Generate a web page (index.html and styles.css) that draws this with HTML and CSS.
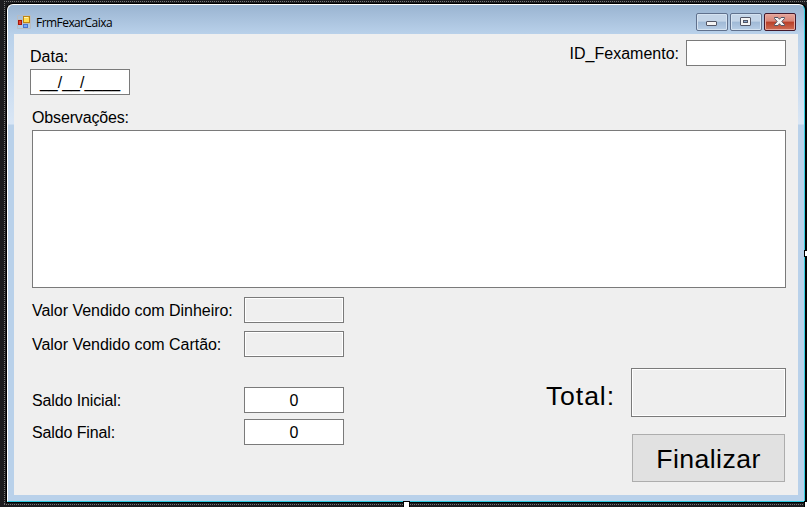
FILE: index.html
```html
<!DOCTYPE html>
<html lang="pt-BR">
<head>
<meta charset="utf-8">
<title>FrmFexarCaixa</title>
<link rel="stylesheet" href="styles.css">
</head>
<body>
<div class="designer">
  <svg class="selection" width="807" height="507" aria-hidden="true">
    <path d="M4 1.5H807M4 504.5H807" stroke="#777" stroke-dasharray="1 1"/>
    <path d="M4.500 1V504" stroke="#777" stroke-dasharray="1 1"/>
  </svg>
  <main class="window">
    <header class="titlebar">
      <svg class="app-icon" width="14" height="14" viewBox="0 0 14 14">
        <path d="M.5 .5H13.500V13.500H.5ZM.5 4.500H6.500M6.500 .5V13.500M6.500 8.500H13.500" fill="none" stroke="#b9bcc0"/>
        <rect x="1.500" y="5.500" width="3" height="4" fill="#e2432b" stroke="#a91509"/>
        <rect x="6.500" y="1.500" width="6" height="6" fill="#ffdc52" stroke="#bd8511"/>
        <path d="M7 2.500H11" stroke="#fff3b0"/>
        <rect x="6.500" y="9.500" width="4" height="3" fill="#77a8f6" stroke="#4775cc"/>
      </svg>
      <span class="title">FrmFexarCaixa</span>
      <div class="controls">
        <button class="control" aria-label="Minimizar"><svg width="30" height="16" viewBox="0 0 30 16"><rect x="9.500" y="7.500" width="10" height="4" rx=".5" fill="#f4f4f4" stroke="#535665"/></svg></button>
        <button class="control" aria-label="Maximizar"><svg width="30" height="16" viewBox="0 0 30 16"><rect x="9.500" y="3.500" width="10" height="8" rx=".5" fill="#f4f4f4" stroke="#535665"/><rect x="12.500" y="6.500" width="4" height="2" fill="#8aa9cf" stroke="#535665"/></svg></button>
        <button class="control close" aria-label="Fechar"><svg width="30" height="16" viewBox="0 0 30 16"><path d="M9.500 3.500H13L14.500 5.300 16 3.500H19.500V4.500L16.800 7.500 19.500 10.500V11.500H16L14.500 9.700 13 11.500H9.500V10.500L12.200 7.500 9.500 4.500Z" fill="#f4f4f4" stroke="#535665"/></svg></button>
      </div>
    </header>
    <form class="form">
      <div class="top">
        <div class="date"><label class="date-label">Data:</label><div class="box date-box">__/__/____</div></div>
        <div class="id"><label>ID_Fexamento:</label><div class="box"></div></div>
      </div>
      <label class="notes-label">Observações:</label>
      <div class="notes"></div>
      <div class="bottom">
        <div class="values">
          <div class="row"><label class="wide-label">Valor Vendido com Dinheiro:</label><div class="box readonly"></div></div>
          <div class="row"><label class="wide-label">Valor Vendido com Cartão:</label><div class="box readonly"></div></div>
          <div class="row initial"><label>Saldo Inicial:</label><div class="box">0</div></div>
          <div class="row final"><label>Saldo Final:</label><div class="box">0</div></div>
        </div>
        <div class="summary">
          <div class="total"><label>Total:</label><div class="total-box readonly"></div></div>
          <button type="button" class="finish">Finalizar</button>
        </div>
      </div>
    </form>
  </main>
  <i class="handle right"></i><i class="handle base"></i><i class="handle corner"></i>
</div>
</body>
</html>
```

FILE: styles.css
```css
* { box-sizing: border-box; }
body { margin: 0; background: #1c1c1f; overflow: hidden; font: 16px/18px "Liberation Sans", Arial, sans-serif; color: #000; }
.designer { position: relative; width: 807px; height: 507px; padding: 4px 2px 5px 7px; }
.selection { position: absolute; inset: 0; }
.window {
  position: relative; width: 798px; height: 498px;
  border: 1px solid; border-color: #fff #35cfe0 #2bcbe0 #fff;
  border-radius: 6px 6px 0 0; padding: 0 6px 6px;
  background: linear-gradient(#9ab4d1 0, #b9d1ea 29px, #d9e6f5 118px, #d9e6f5 119px, #b9d1ea 120px);
  box-shadow: 0 0 0 1px #000, 2px 0 0 #000;
}
.titlebar { display: flex; height: 29px; padding: 8px 2px 0 3px; }
.app-icon { flex: none; margin-top: 2px; }
.title { margin-left: 5px; font: 12px/20px "Open Sans", "Noto Sans", sans-serif; letter-spacing: -.55px; }
.controls { display: flex; gap: 2px; margin-left: auto; }
.control { width: 32px; height: 18px; padding: 0; border: 1px solid #60718d; border-radius: 2px; background: linear-gradient(#c4d5e8 0 45%, #9fb9d6 50%, #b8cee6); box-shadow: inset 0 0 0 1px #d5e3f1; }
.control svg { display: block; }
.close { border-color: #43192b; background: linear-gradient(#e5a69b 0, #d98678 45%, #b83e27 50%, #cf6e56); box-shadow: inset 0 0 0 1px #e7aaa0; }
.form { height: 461px; padding: 6px 12px 0 16px; background: #efefef; }
.top { display: flex; justify-content: space-between; }
.date { padding-top: 7px; }
.date-label { display: block; height: 22px; line-height: 20px; }
.box { display: flex; align-items: center; justify-content: center; width: 100px; height: 26px; padding-top: 1px; border: 1px solid #7a7a7a; background: #fff; }
.date-box { white-space: pre; }
.id { display: flex; gap: 7px; line-height: 28px; }
.notes-label { display: block; margin: 13px 0 0 2px; height: 22px; line-height: 20px; letter-spacing: -.15px; }
.notes { margin-left: 2px; height: 158px; border: 1px solid #7a7a7a; background: #fff; }
.bottom { display: flex; justify-content: space-between; padding: 9px 0 0 2px; }
.row { display: flex; height: 26px; margin-bottom: 8px; line-height: 28px; }
.row label { width: 212px; white-space: nowrap; letter-spacing: -.12px; }
.row .wide-label { letter-spacing: -.03px; }
.readonly { background: #efefef; box-shadow: inset 0 0 0 1px #fff; }
.initial { margin-top: 30px; margin-bottom: 6px; }
.summary { padding-top: 71px; font-size: 26.67px; }
.total { display: flex; gap: 16px; line-height: 56px; letter-spacing: .9px; }
.total-box { width: 155px; height: 49px; border: 1px solid #7a7a7a; }
.finish { display: block; width: 153px; height: 48px; margin: 10px 1px 0 auto; padding: 2px 0 0; border: 1px solid #adadad; background: #e1e1e1; color: #000; font: 26.67px/44px "Liberation Sans", Arial, sans-serif; letter-spacing: .4px; }
.handle { position: absolute; width: 5px; height: 5px; background: #fff; outline: 1px solid #000; }
.right { left: 805px; top: 251px; }
.base { left: 404px; top: 502px; }
.corner { left: 805px; top: 502px; }
```
